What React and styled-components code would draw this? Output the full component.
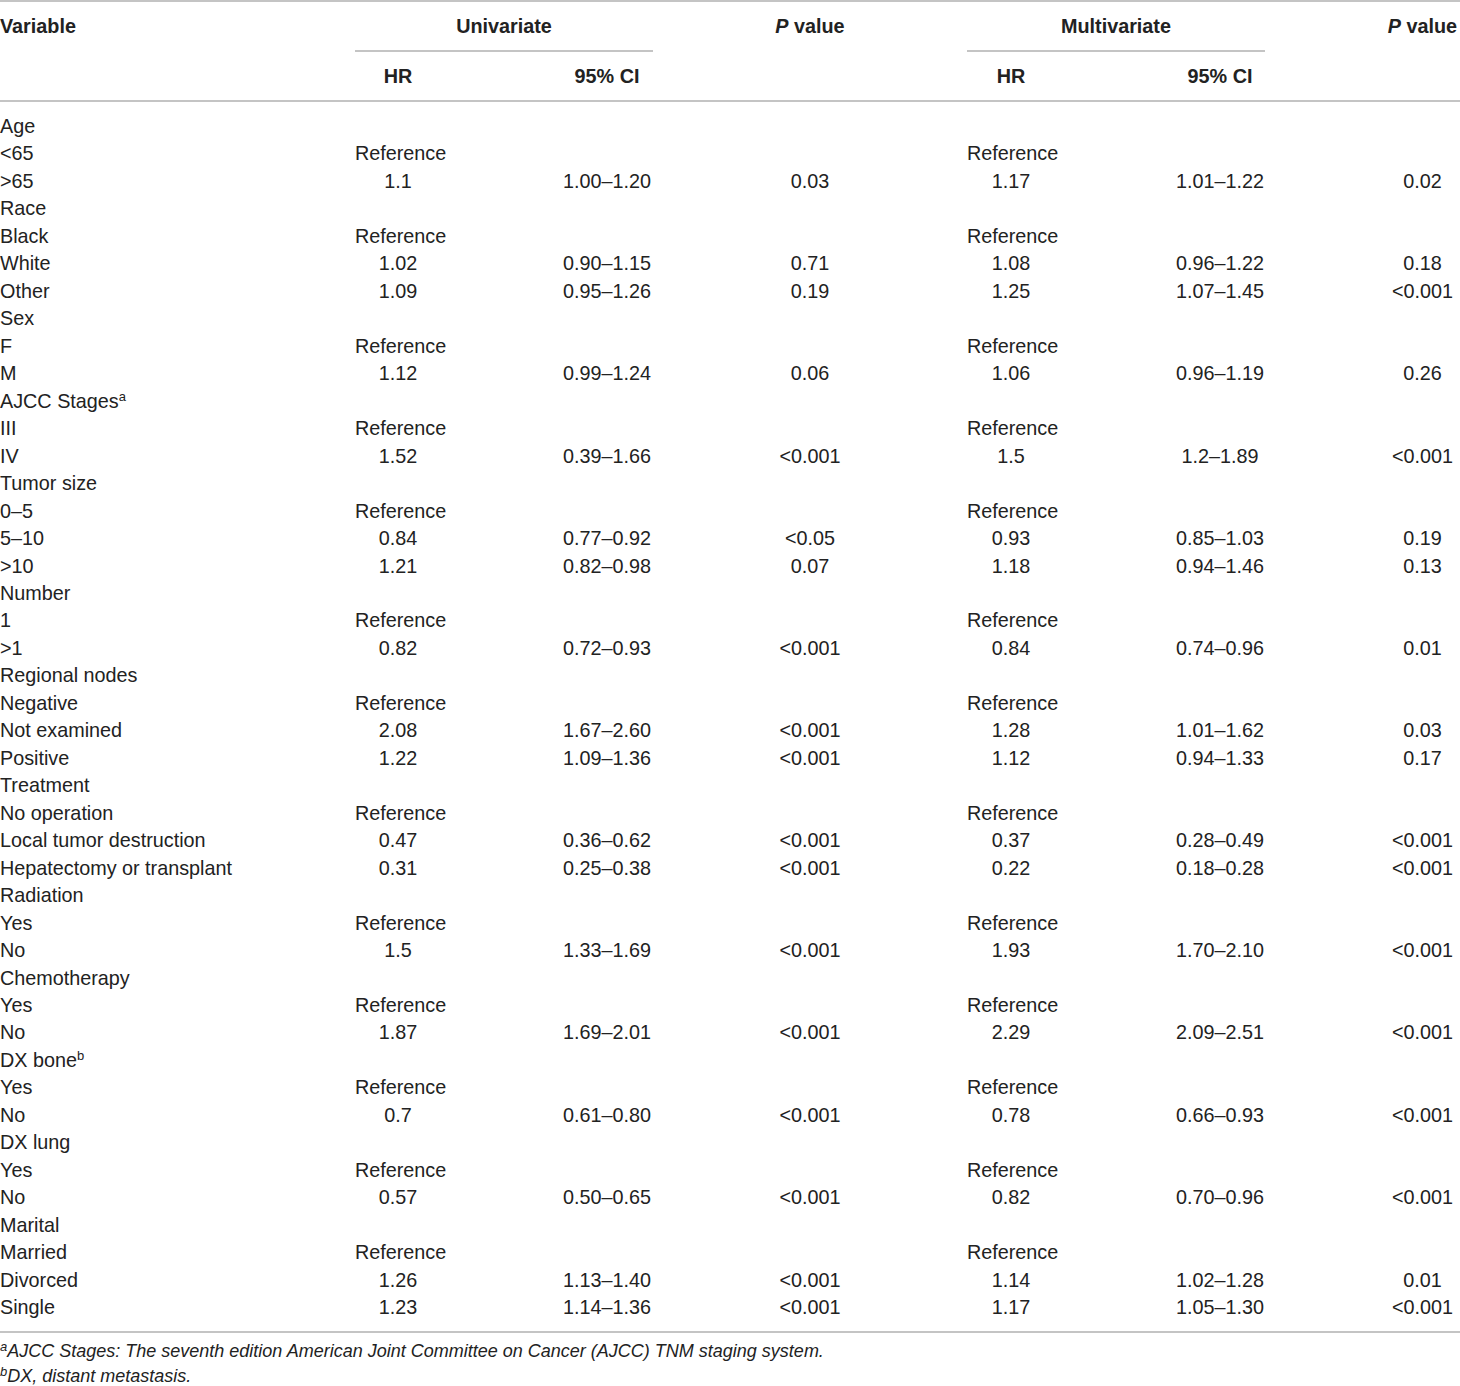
import React from "react";
import styled, { createGlobalStyle } from "styled-components";

const Global = createGlobalStyle`
  html, body { margin: 0; padding: 0; background: #fff; }
  body { font-family: "Liberation Sans", Arial, sans-serif; color: #222; }
`;

const Wrap = styled.div`
  width: 1460px;
  border-top: 2px solid #c4c4c4;
`;

const Grid = styled.div`
  display: grid;
  grid-template-columns: 235px 86px 92px 74px 88px 90px 75px;
  column-gap: 120px;
  font-size: 19.8px;
  line-height: 27.47px;
`;

const HeadCell = styled.div`
  font-weight: bold;
  text-align: ${(p) => (p.$left ? "left" : "center")};
  white-space: nowrap;
  grid-column: ${(p) => p.$col || "auto"};
  grid-row: ${(p) => p.$row || "auto"};
  padding-top: ${(p) => p.$pt || 0}px;
  height: ${(p) => p.$h}px;
  box-sizing: border-box;
  i { font-style: italic; }
`;

const GroupHead = styled(HeadCell)`
  border-bottom: 2px solid #c4c4c4;
`;

const HeadRule = styled.div`
  grid-column: 1 / -1;
  height: 2px;
  background: #c4c4c4;
  margin-bottom: 11px;
`;

const Cell = styled.div`
  white-space: nowrap;
  text-align: ${(p) => (p.$left ? "left" : "center")};
  sup { font-size: 13px; line-height: 0; vertical-align: 7px; }
`;

const BottomRule = styled.div`
  height: 2px;
  background: #c4c4c4;
  margin-top: 9px;
`;

const Notes = styled.div`
  font-style: italic;
  font-size: 18px;
  line-height: 25px;
  padding-top: 6px;
  sup { font-size: 13px; line-height: 0; vertical-align: 6px; }
`;

const R = "Reference";
const rows = [
  ["Age"],
  ["<65", R, "", "", R, "", ""],
  [">65", "1.1", "1.00–1.20", "0.03", "1.17", "1.01–1.22", "0.02"],
  ["Race"],
  ["Black", R, "", "", R, "", ""],
  ["White", "1.02", "0.90–1.15", "0.71", "1.08", "0.96–1.22", "0.18"],
  ["Other", "1.09", "0.95–1.26", "0.19", "1.25", "1.07–1.45", "<0.001"],
  ["Sex"],
  ["F", R, "", "", R, "", ""],
  ["M", "1.12", "0.99–1.24", "0.06", "1.06", "0.96–1.19", "0.26"],
  [<>AJCC Stages<sup>a</sup></>],
  ["III", R, "", "", R, "", ""],
  ["IV", "1.52", "0.39–1.66", "<0.001", "1.5", "1.2–1.89", "<0.001"],
  ["Tumor size"],
  ["0–5", R, "", "", R, "", ""],
  ["5–10", "0.84", "0.77–0.92", "<0.05", "0.93", "0.85–1.03", "0.19"],
  [">10", "1.21", "0.82–0.98", "0.07", "1.18", "0.94–1.46", "0.13"],
  ["Number"],
  ["1", R, "", "", R, "", ""],
  [">1", "0.82", "0.72–0.93", "<0.001", "0.84", "0.74–0.96", "0.01"],
  ["Regional nodes"],
  ["Negative", R, "", "", R, "", ""],
  ["Not examined", "2.08", "1.67–2.60", "<0.001", "1.28", "1.01–1.62", "0.03"],
  ["Positive", "1.22", "1.09–1.36", "<0.001", "1.12", "0.94–1.33", "0.17"],
  ["Treatment"],
  ["No operation", R, "", "", R, "", ""],
  ["Local tumor destruction", "0.47", "0.36–0.62", "<0.001", "0.37", "0.28–0.49", "<0.001"],
  ["Hepatectomy or transplant", "0.31", "0.25–0.38", "<0.001", "0.22", "0.18–0.28", "<0.001"],
  ["Radiation"],
  ["Yes", R, "", "", R, "", ""],
  ["No", "1.5", "1.33–1.69", "<0.001", "1.93", "1.70–2.10", "<0.001"],
  ["Chemotherapy"],
  ["Yes", R, "", "", R, "", ""],
  ["No", "1.87", "1.69–2.01", "<0.001", "2.29", "2.09–2.51", "<0.001"],
  [<>DX bone<sup>b</sup></>],
  ["Yes", R, "", "", R, "", ""],
  ["No", "0.7", "0.61–0.80", "<0.001", "0.78", "0.66–0.93", "<0.001"],
  ["DX lung"],
  ["Yes", R, "", "", R, "", ""],
  ["No", "0.57", "0.50–0.65", "<0.001", "0.82", "0.70–0.96", "<0.001"],
  ["Marital"],
  ["Married", R, "", "", R, "", ""],
  ["Divorced", "1.26", "1.13–1.40", "<0.001", "1.14", "1.02–1.28", "0.01"],
  ["Single", "1.23", "1.14–1.36", "<0.001", "1.17", "1.05–1.30", "<0.001"],
];

export default function App() {
  return (
    <Wrap>
      <Global />
      <Grid>
        <HeadCell $left $col="1" $row="1" $h={50} $pt={11}>Variable</HeadCell>
        <GroupHead $col="2 / 4" $row="1" $h={50} $pt={11}>Univariate</GroupHead>
        <HeadCell $col="4" $row="1" $h={50} $pt={11}><i>P</i> value</HeadCell>
        <GroupHead $col="5 / 7" $row="1" $h={50} $pt={11}>Multivariate</GroupHead>
        <HeadCell $col="7" $row="1" $h={50} $pt={11}><i>P</i> value</HeadCell>
        <HeadCell $col="2" $row="2" $h={48} $pt={11}>HR</HeadCell>
        <HeadCell $col="3" $row="2" $h={48} $pt={11}>95% CI</HeadCell>
        <HeadCell $col="5" $row="2" $h={48} $pt={11}>HR</HeadCell>
        <HeadCell $col="6" $row="2" $h={48} $pt={11}>95% CI</HeadCell>
        <HeadRule />
        {rows.map((r, i) => (
          <React.Fragment key={i}>
            <Cell $left>{r[0]}</Cell>
            {[1, 2, 3, 4, 5, 6].map((c) => (
              <Cell key={c}>{r[c] || ""}</Cell>
            ))}
          </React.Fragment>
        ))}
      </Grid>
      <BottomRule />
      <Notes>
        <div><sup>a</sup>AJCC Stages: The seventh edition American Joint Committee on Cancer (AJCC) TNM staging system.</div>
        <div><sup>b</sup>DX, distant metastasis.</div>
      </Notes>
    </Wrap>
  );
}
